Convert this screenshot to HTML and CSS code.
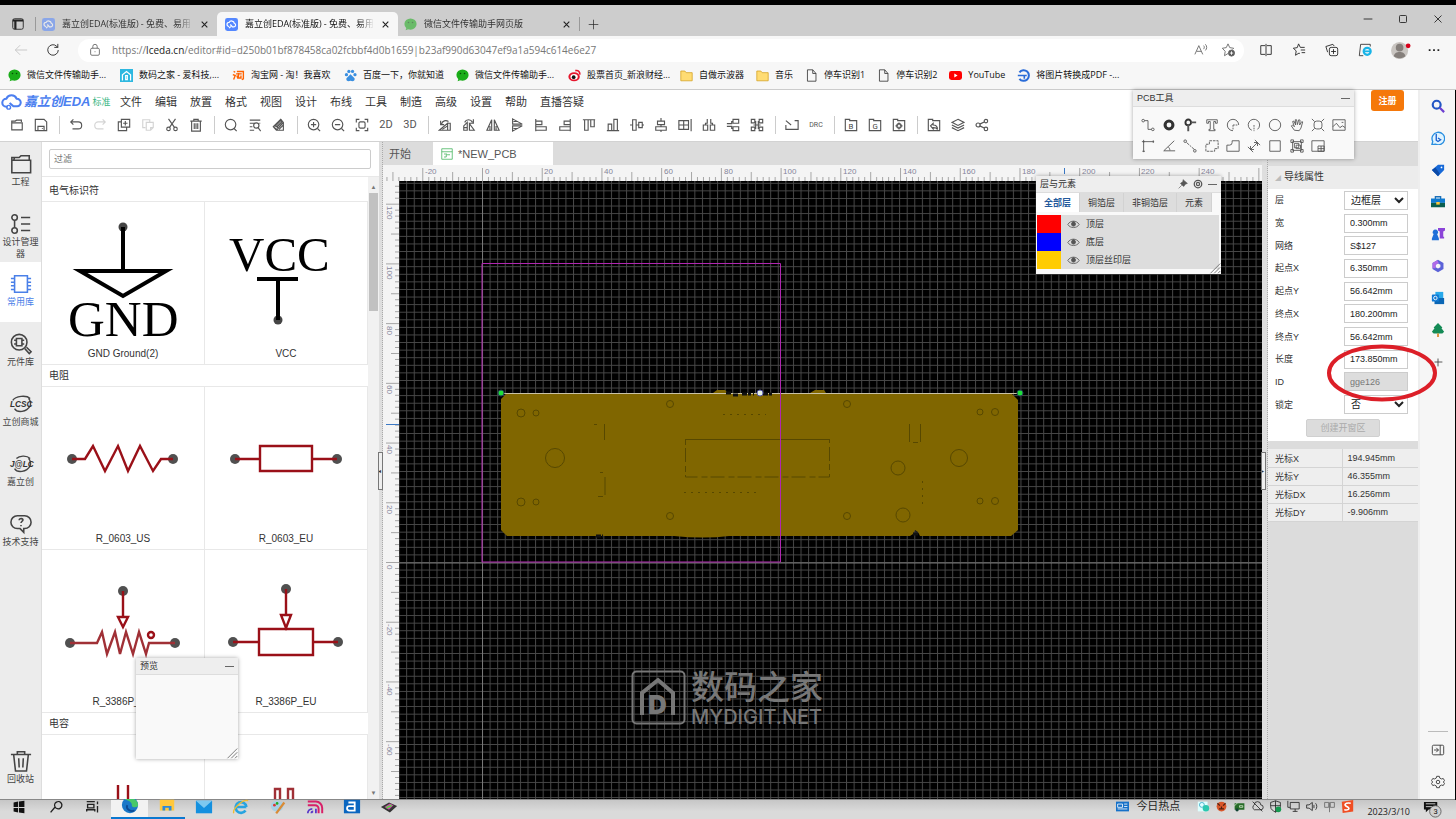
FILE: index.html
```html
<!DOCTYPE html>
<html lang="zh-CN">
<head>
  <meta charset="UTF-8" />
  <meta name="viewport" content="width=device-width, initial-scale=1" />
  <title>嘉立创EDA(标准版) - 免费、易用</title>
  <link rel="stylesheet" href="styles.css">
</head>
<body>
  <!-- shared icons -->
  <svg class="sprite" aria-hidden="true">
    <symbol id="close" viewBox="0 0 16 16"><path d="M3 3l10 10M13 3L3 13"/></symbol>
    <symbol id="cloud" viewBox="0 0 16 16"><rect width="16" height="16" rx="3" fill="#5588ff" stroke="none"/><path d="M5 10.500a2.500 2.500 0 010-5 3.500 3.500 0 016.500 1 2.200 2.200 0 01-.5 4.300H9L6.500 8M5 12.500l2-2" stroke="#fff" stroke-width="1.500"/></symbol>
    <symbol id="wechat" viewBox="0 0 16 16"><ellipse cx="8" cy="7.500" rx="7.500" ry="7" fill="#1aad19" stroke="none"/><path d="M3 12l-1 3 4-1.500z" fill="#1aad19" stroke="none"/><circle cx="5.500" cy="5.500" r="1" fill="#064d06" stroke="none"/><circle cx="10.500" cy="5.500" r="1" fill="#064d06" stroke="none"/></symbol>
    <symbol id="folder-y" viewBox="0 0 16 16"><path d="M1 2.500h5l1.500 2H15v10H1z" fill="#ffdc73" stroke="#d6a528"/></symbol>
    <symbol id="page" viewBox="0 0 16 16"><path d="M3 1h6.500l4 4.500v9.500H3zM9.500 1v4.500h4"/></symbol>
    <symbol id="eye" viewBox="0 0 16 16"><path d="M1 8c3-5.500 11-5.500 14 0-3 5-11 5-14 0z"/><circle cx="8" cy="7.500" r="2.500" fill="#555"/><path d="M8 4v4" stroke-width="2"/></symbol>
    <symbol id="grip" viewBox="0 0 16 16"><path d="M2 15L15 2M7 15l8-8M12 15l3-3"/></symbol>
    <symbol id="folder" viewBox="0 0 16 16"><path d="M2 13.500v-10h4l1.500-1H13v2M2 5.500h12v8H2z"/></symbol>
    <symbol id="save" viewBox="0 0 16 16"><path d="M1.500 1.500h10l3 3v10h-13zM4.500 14V9.500h7V14M9 12h1"/></symbol>
    <symbol id="undo" viewBox="0 0 16 16"><path d="M5 1.500L2 4.500l3 3M2 4.500h8.500a3.800 3.800 0 010 8H4"/></symbol>
    <symbol id="redo" viewBox="0 0 16 16"><path d="M11 1.500l3 3-3 3M14 4.500H6a3.800 3.800 0 000 8h6"/></symbol>
    <symbol id="copy" viewBox="0 0 16 16"><path d="M5 1.500h9.500v9H5zM5 4.500H1.500v10H11v-4M9.500 3.500v5M7 6h5"/></symbol>
    <symbol id="paste" viewBox="0 0 16 16"><path d="M5 11H2V2h8v3M6 5h8v6l-3 3H6zM11 14v-3h3"/></symbol>
    <symbol id="cut" viewBox="0 0 16 16"><path d="M4 1l7 10M12 1L5 11"/><circle cx="4" cy="12.500" r="2"/><circle cx="12" cy="12.500" r="2"/></symbol>
    <symbol id="bin" viewBox="0 0 16 16"><path d="M1.500 3.500h13M5.500 3.500v-2h5v2M3 3.500V15h10V3.500M6 6v6.500M8 6v6.500M10 6v6.500"/></symbol>
    <symbol id="find" viewBox="0 0 16 16"><circle cx="7.500" cy="7.500" r="6"/><path d="M11.500 12l3 3"/></symbol>
    <symbol id="findlist" viewBox="0 0 16 16"><path d="M2 2.500h12M2 6h5M2 10h3M2 14h5M14 6h-1"/><circle cx="9.500" cy="8.500" r="3"/><path d="M11.500 11l3 4"/></symbol>
    <symbol id="eraser" viewBox="0 0 16 16"><path d="M1.500 10L10 1.500l3 3.500v9H5zM5 14l8-9M1.500 10l4 3M8 13l5-5M7 12l-2-3"/><path d="M3 9l7-7 1.500 3L6 10z" fill="#888"/></symbol>
    <symbol id="zin" viewBox="0 0 16 16"><circle cx="7.500" cy="7.500" r="6"/><path d="M12 12l3 3M7.500 4.500v6M4.500 7.500h6"/></symbol>
    <symbol id="zout" viewBox="0 0 16 16"><circle cx="7.500" cy="7.500" r="6"/><path d="M12 12l3 3M4.500 7.500h6"/></symbol>
    <symbol id="fit" viewBox="0 0 16 16"><path d="M1.500 5V1.500H5M11 1.500h3.500V5M14.500 11v3.500H11M5 14.500H1.500V11"/><rect x="4.500" y="4.500" width="7" height="7" rx="1.500"/></symbol>
    <symbol id="rotl" viewBox="0 0 16 16"><path d="M1.500 14h9.500V6zM11 6h3v8h-3M4 7c1-4 5-5 8-3M3 3v4.500h4M5 13l6-4" /></symbol>
    <symbol id="rotr" viewBox="0 0 16 16"><path d="M2 14V9l4-4v9zM8.500 14V6.500l5.500 7.500zM3 5c2-4 7-4 9 0M13 1.500V6H9M2 11h4"/></symbol>
    <symbol id="fliph" viewBox="0 0 16 16"><path d="M6.500 2v12H1zM9.500 2v12H15zM4.500 9v5M11.500 9v5"/></symbol>
    <symbol id="flipv" viewBox="0 0 16 16"><path d="M3 1l11 6H3zM3 15l11-6H3zM4 4h5M4 12h5"/></symbol>
    <symbol id="al" viewBox="0 0 16 16"><path d="M2 1v14M2 3.500h7v4H2M2 10h12v4H2"/></symbol>
    <symbol id="ar" viewBox="0 0 16 16"><path d="M14 1v14M14 3.500H7v4h7M14 10H2v4h12"/></symbol>
    <symbol id="at" viewBox="0 0 16 16"><path d="M1 2h14M3 2v12h4V2M10 2v8h4V2"/></symbol>
    <symbol id="ab" viewBox="0 0 16 16"><path d="M1 14.500h14M2.500 14V7h4v7M9 14V1.500h4V14"/></symbol>
    <symbol id="cx" viewBox="0 0 16 16"><path d="M3 2h4v12H3zM10 5h4v6h-4zM0 8h3M7 8h3M14 8h2"/></symbol>
    <symbol id="cy" viewBox="0 0 16 16"><path d="M4 3.500h8v4H4zM2 10h12v4H2zM8 0v3.500M8 7.500V10M8 14v2"/></symbol>
    <symbol id="tbl" viewBox="0 0 16 16"><path d="M1 3h11v10H1zM1 8h11M6.500 3v10M15 1v14"/></symbol>
    <symbol id="disth" viewBox="0 0 16 16"><path d="M1.500 8h5v6h-5zM9.500 8h5v6h-5zM4 8V6h2V1M12 8V6h-2V1"/></symbol>
    <symbol id="distv" viewBox="0 0 16 16"><path d="M8 1.500h6.500v4.500H8zM8 10h6.500v4.500H8zM8 4H6.500v2.500H1M8 12H6.500V9.500H1"/></symbol>
    <symbol id="dist4" viewBox="0 0 16 16"><path d="M1.500 1.500h4v4h-4zM10.500 1.500h4v4h-4zM1.500 10.500h4v4h-4zM10.500 10.500h4v4h-4zM5.500 4h1v8h-1M10.500 4h-1v8h1M4 8h8"/></symbol>
    <symbol id="outline" viewBox="0 0 16 16"><path d="M1 3l6 5M11 3h4v10H1V8"/></symbol>
    <symbol id="fb" viewBox="0 0 16 16"><path d="M1.500 14.500v-13h5V3h8v11.500z"/></symbol>
    <symbol id="lay" viewBox="0 0 16 16"><path d="M8 1.500l7 3.500-7 3.500L1 5zM1 8l7 3.500L15 8M1 11l7 3.500 7-3.500"/></symbol>
    <symbol id="share" viewBox="0 0 16 16"><circle cx="3.500" cy="8" r="2.300"/><circle cx="12.500" cy="3.500" r="2"/><circle cx="12.500" cy="12.500" r="2"/><path d="M5.500 7l5-2.500M5.500 9l5 2.500"/></symbol>
  </svg>

  <header class="titlebar">
    <button class="tab-actions" aria-label="标签操作"><svg class="icon dark" viewBox="0 0 16 16"><rect x="2" y="2" width="12" height="12" rx="2"/><path d="M2 4h12M5 4v10" stroke-width="2.500"/></svg></button>
    <div class="tab">
      <svg class="fav faded"><use href="#cloud"/></svg><span class="tab-text">嘉立创EDA(标准版) - 免费、易用</span>
      <button aria-label="关闭"><svg class="x"><use href="#close"/></svg></button>
    </div>
    <div class="tab current">
      <svg class="fav"><use href="#cloud"/></svg><span class="tab-text">嘉立创EDA(标准版) - 免费、易用</span>
      <button aria-label="关闭"><svg class="x"><use href="#close"/></svg></button>
    </div>
    <div class="tab">
      <svg class="fav faded"><use href="#wechat"/></svg><span class="tab-text">微信文件传输助手网页版</span>
      <button aria-label="关闭"><svg class="x"><use href="#close"/></svg></button>
    </div>
    <button class="new-tab" aria-label="新标签"><svg class="icon dark" viewBox="0 0 16 16"><path d="M8 1v14M1 8h14"/></svg></button>
    <div class="win-controls">
      <button aria-label="最小化"><svg class="icon dark" viewBox="0 0 16 16"><path d="M3 8h10"/></svg></button>
      <button aria-label="最大化"><svg class="icon dark" viewBox="0 0 16 16"><rect x="4" y="4" width="8" height="8" rx="1"/></svg></button>
      <button aria-label="关闭窗口"><svg class="icon dark" viewBox="0 0 16 16"><path d="M4 4l8 8M12 4l-8 8"/></svg></button>
    </div>
  </header>

  <div class="addressbar">
    <button class="nav-btn" aria-label="后退"><svg class="icon light" viewBox="0 0 16 16"><path d="M15 8H1.500M7 2.500L1.500 8 7 13.500"/></svg></button>
    <button class="nav-btn" aria-label="刷新"><svg class="icon dark" viewBox="0 0 16 16"><path d="M14 8a6 6 0 11-2-4.500L13.500 5M13.500 1v4h-4"/></svg></button>
    <div class="url">
      <svg class="icon" viewBox="0 0 16 16"><rect x="3" y="6" width="10" height="8" rx="1.500"/><path d="M5.500 6V4a2.500 2.500 0 015 0v2M8 9.500v1"/></svg>
      <span class="url-text">https://<b>lceda.cn</b>/editor#id=d250b01bf878458ca02fcbbf4d0b1659|b23af990d63047ef9a1a594c614e6e27</span>
      <svg class="icon" viewBox="0 0 16 16"><path d="M1 13L5.500 3 10 13M3 9.500h5M11 3c1 1 1 2.500 0 4M13 1.500c2 2 2 5 0 7"/></svg>
      <svg class="icon" viewBox="0 0 16 16"><path d="M8 12l-4 2.500.8-5L1.500 6l4.500-.7L8 1l2 4.300 4.500.7-1.500 1.500"/><circle cx="12" cy="11.500" r="3.500" fill="#555"/><path d="M12 9.500v4M10 11.500h4" stroke="#fff"/></svg>
    </div>
    <div class="browser-icons">
      <svg class="icon dark" viewBox="0 0 16 16"><path d="M7 3H2v10h5M9 3h5v10H9M8 1v14"/></svg>
      <svg class="icon dark" viewBox="0 0 16 16"><path d="M9 12l-1-.5L4 14l.8-5L1.500 6 6 5.300 7.500 1l2 4h5M10 8h5M11 11h4"/></svg>
      <svg class="icon dark" viewBox="0 0 16 16"><rect x="5" y="5" width="9.500" height="9.500" rx="2"/><path d="M3 10.500L1 4l8-2.500 1.500 2M9.700 7v5.500M7 9.700h5.500"/></svg>
      <svg class="icon" viewBox="0 0 16 16"><path d="M14 4V1.500H3L1.500 14.500H6" stroke="#333"/><circle cx="10.500" cy="9.500" r="4" stroke="#18b4e8" stroke-width="2.500"/><path d="M7 9.500h7" stroke="#18b4e8" stroke-width="2"/></svg>
      <svg class="avatar" viewBox="0 0 22 20"><circle cx="9" cy="10" r="9" fill="#c9c5c1"/><circle cx="9" cy="7" r="4" fill="#857f7b"/><path d="M3 16c0-6 12-6 12 0-4 3-8 3-12 0z" fill="#857f7b"/><circle cx="18" cy="5" r="2.500" fill="#d8001b"/></svg>
      <svg class="icon dark" viewBox="0 0 16 16"><path d="M2 8h2M7 8h2M12 8h2" stroke-width="2"/></svg>
    </div>
  </div>

  <nav class="bookmarks">
    <a class="wide" href="#"><svg><use href="#wechat"/></svg>微信文件传输助手...</a>
    <a class="wide" href="#"><svg viewBox="0 0 16 16"><rect width="16" height="16" fill="#2eb8e0" stroke="none"/><path d="M3 14V7l5-4 5 4v7M7 8h2v5H7z" stroke="#fff" stroke-width="1.500"/></svg>数码之家 - 爱科技,...</a>
    <a class="wide" href="#"><svg viewBox="0 0 16 16"><path d="M2 3l2 1M1 7l3 1-2 5M6 3h8v9l-2 1M5 6h7M8 5v6M6 8l1 3h4V8" stroke="#ff6200" stroke-width="1.700"/></svg>淘宝网 - 淘！我喜欢</a>
    <a class="wide" href="#"><svg viewBox="0 0 16 16"><g fill="#3a8fe0" stroke="none"><circle cx="3" cy="7" r="2"/><circle cx="6" cy="3" r="2"/><circle cx="10.500" cy="3" r="2"/><circle cx="13.500" cy="7" r="2"/><path d="M8 6.500l5 5c1 4-3 4-5 3-2 1-6 1-5-3z"/></g></svg>百度一下，你就知道</a>
    <a class="wide" href="#"><svg><use href="#wechat"/></svg>微信文件传输助手...</a>
    <a class="wide" href="#"><svg viewBox="0 0 16 16"><ellipse cx="7.500" cy="9.500" rx="7" ry="5.500" fill="#e6162d" stroke="none"/><ellipse cx="7.500" cy="9.500" rx="4.500" ry="3.500" fill="#fff" stroke="none"/><circle cx="7" cy="10" r="2.300" fill="#111" stroke="none"/><path d="M9 2c4-1 6 2 5.500 5" stroke="#e6162d" stroke-width="2"/></svg>股票首页_新浪财经...</a>
    <a href="#"><svg><use href="#folder-y"/></svg>自做示波器</a>
    <a href="#"><svg><use href="#folder-y"/></svg>音乐</a>
    <a href="#"><svg><use href="#page"/></svg>停车识别1</a>
    <a href="#"><svg><use href="#page"/></svg>停车识别2</a>
    <a href="#"><svg viewBox="0 0 16 16"><rect y="2.500" width="16" height="11" rx="3" fill="#f00" stroke="none"/><path d="M6.500 5.500v5l4-2.500z" fill="#fff" stroke="none"/></svg>YouTube</a>
    <a href="#"><svg viewBox="0 0 16 16"><path d="M3 4a6.500 6.500 0 110 8" stroke="#2a6cd8" stroke-width="2.500"/><path d="M1 8h8M9 8v4M9 8h3" stroke="#2a6cd8" stroke-width="2"/></svg>将图片转换成PDF -...</a>
  </nav>

  <div class="window">
    <main class="app">
      <nav class="menubar">
        <a class="brand" href="#">
          <svg viewBox="0 0 22 18"><path d="M7 13.500H5.500a4.200 4.200 0 010-8.500A6 6 0 0116.500 5a4 4 0 01.500 8h-4L9 9.500" stroke="#4c7ff0" stroke-width="2.200"/><circle cx="8" cy="14" r="2" stroke="#4c7ff0" stroke-width="1.500"/></svg>
          <i>嘉立创EDA</i><small>标准</small>
        </a>
        <button>文件</button><button>编辑</button><button>放置</button><button>格式</button><button>视图</button><button>设计</button><button>布线</button><button>工具</button><button>制造</button><button>高级</button><button>设置</button><button>帮助</button><button>直播答疑</button>
        <button class="register">注册</button>
      </nav>

      <div class="toolbar">
        <button aria-label="打开"><svg><use href="#folder"/></svg></button>
        <button aria-label="保存"><svg><use href="#save"/></svg></button>
        <span class="sep"></span>
        <button aria-label="撤销"><svg><use href="#undo"/></svg></button>
        <button class="off" aria-label="重做"><svg><use href="#redo"/></svg></button>
        <button aria-label="复制"><svg><use href="#copy"/></svg></button>
        <button class="off" aria-label="粘贴"><svg><use href="#paste"/></svg></button>
        <button aria-label="剪切"><svg><use href="#cut"/></svg></button>
        <button aria-label="删除"><svg><use href="#bin"/></svg></button>
        <span class="sep"></span>
        <button aria-label="查找"><svg><use href="#find"/></svg></button>
        <button aria-label="查找相似"><svg><use href="#findlist"/></svg></button>
        <button aria-label="清除"><svg><use href="#eraser"/></svg></button>
        <span class="sep"></span>
        <button aria-label="放大"><svg><use href="#zin"/></svg></button>
        <button aria-label="缩小"><svg><use href="#zout"/></svg></button>
        <button aria-label="适合窗口"><svg><use href="#fit"/></svg></button>
        <button>2D</button>
        <button>3D</button>
        <span class="sep"></span>
        <button aria-label="左旋"><svg><use href="#rotl"/></svg></button>
        <button aria-label="右旋"><svg><use href="#rotr"/></svg></button>
        <button aria-label="水平翻转"><svg><use href="#fliph"/></svg></button>
        <button aria-label="垂直翻转"><svg><use href="#flipv"/></svg></button>
        <button aria-label="左对齐"><svg><use href="#al"/></svg></button>
        <button aria-label="右对齐"><svg><use href="#ar"/></svg></button>
        <button aria-label="顶对齐"><svg><use href="#at"/></svg></button>
        <button aria-label="底对齐"><svg><use href="#ab"/></svg></button>
        <button aria-label="水平居中"><svg><use href="#cx"/></svg></button>
        <button aria-label="垂直居中"><svg><use href="#cy"/></svg></button>
        <button aria-label="对齐网格"><svg><use href="#tbl"/></svg></button>
        <button aria-label="水平分布"><svg><use href="#disth"/></svg></button>
        <button aria-label="垂直分布"><svg><use href="#distv"/></svg></button>
        <button aria-label="阵列分布"><svg><use href="#dist4"/></svg></button>
        <span class="sep"></span>
        <button aria-label="边框"><svg><use href="#outline"/></svg></button>
        <button class="drc">DRC</button>
        <span class="sep"></span>
        <button aria-label="BOM"><svg viewBox="0 0 16 16"><use href="#fb"/><text x="5" y="12">B</text></svg></button>
        <button aria-label="Gerber"><svg viewBox="0 0 16 16"><use href="#fb"/><text x="5" y="12">G</text></svg></button>
        <button aria-label="坐标文件"><svg viewBox="0 0 16 16"><use href="#fb"/><circle cx="8" cy="9" r="2.500"/><path d="M8 5v3M8 10v3M4 9h3M9 9h3"/></svg></button>
        <span class="sep"></span>
        <button aria-label="导入"><svg viewBox="0 0 16 16"><use href="#fb"/><path d="M4 9l3-3v2c4 0 5 2 5 5-1-2-2-2-5-2v1.500z"/></svg></button>
        <button aria-label="图层"><svg><use href="#lay"/></svg></button>
        <button aria-label="分享"><svg><use href="#share"/></svg></button>
      </div>

      <div class="workspace">
        <aside class="rail">
          <button><svg viewBox="0 0 24 24"><path d="M2 21.500V5h8l2-2h9v4M2 8h20.500v13.500H2zM5 5l-1 3"/></svg>工程</button>
          <button><svg viewBox="0 0 24 24"><circle cx="5" cy="5" r="3"/><circle cx="5" cy="19" r="3"/><path d="M5 8v8M12 5h10M12 12h10M12 19h10"/></svg>设计管理器</button>
          <button class="selected"><svg viewBox="0 0 24 24"><path d="M5 3h14v18H5zM1 6h4M1 10h4M1 14h4M1 18h4M19 6h4M19 10h4M19 14h4M19 18h4"/></svg>常用库</button>
          <button><svg viewBox="0 0 24 24"><circle cx="10" cy="10" r="8.500"/><path d="M7 6h6v8H7zM4.500 8H7M4.500 12H7M13 8h2.500M13 12h2.500M16 17l5 5.500 2-2-5-5"/></svg>元件库</button>
          <button><svg viewBox="0 0 24 24"><path d="M22 6C18 2 6 3 3 8M5 17c3 5 13 4 17-3 1-3 0-7-2-8" stroke-width="1.500"/><text x="0" y="15">LCSC</text></svg>立创商城</button>
          <button><svg viewBox="0 0 24 24"><path d="M22 6C18 2 10 3 7 6M5 17c3 5 13 4 17-3 1-3 0-7-2-8" stroke-width="1.500"/><text x="0" y="15">J@LC</text></svg>嘉立创</button>
          <button><svg viewBox="0 0 24 24"><path d="M8 3h8a7 7 0 010 14h-1v4l-4-4H8A7 7 0 018 3z"/><path d="M10 8c0-3 5-2 4 0-.5 1-2 1.500-2 3M12 13v1.500"/></svg>技术支持</button>
          <button class="trash"><svg viewBox="0 0 24 24"><path d="M1 5h22M8 5V2h8v3M4 5l2 18h12l2-18M9.500 9l.5 10M14.500 9l-.5 10"/></svg>回收站</button>
        </aside>

        <section class="library">
          <div class="filter"><input type="text" placeholder="过滤" aria-label="过滤"></div>
          <div class="lib-body">
            <div class="lib-list">
              <h2>电气标识符</h2>
              <div class="cells">
                <figure>
                  <svg viewBox="0 0 162 141"><circle cx="81" cy="25" r="4.500" fill="#444"/><g stroke="#000" stroke-width="4"><path d="M81 25v43"/><path d="M38 69h86L81 94z" stroke-miterlimit="8"/></g><text x="26" y="134" font-size="51">GND</text></svg>
                  <figcaption>GND Ground(2)</figcaption>
                </figure>
                <figure>
                  <svg viewBox="0 0 162 141"><circle cx="73" cy="118" r="4.500" fill="#444"/><path d="M52 77h41M73 77v41" stroke="#000" stroke-width="4"/><text x="24" y="69" font-size="49">VCC</text></svg>
                  <figcaption>VCC</figcaption>
                </figure>
              </div>
              <h2>电阻</h2>
              <div class="cells">
                <figure>
                  <svg viewBox="0 0 162 141"><g fill="#505050"><circle cx="30" cy="72" r="5"/><circle cx="131" cy="72" r="5"/></g><path class="wire" d="M30 72h13l8-13 12 25 13-25 10 25 12-25 13 25 8-12h12"/></svg>
                  <figcaption>R_0603_US</figcaption>
                </figure>
                <figure>
                  <svg viewBox="0 0 162 141"><g fill="#505050"><circle cx="30" cy="72" r="5"/><circle cx="132" cy="72" r="5"/></g><path class="wire" d="M30 72h25M107 72h25M55 59h52v25H55z"/></svg>
                  <figcaption>R_0603_EU</figcaption>
                </figure>
                <figure>
                  <svg viewBox="0 0 162 141"><g fill="#505050"><circle cx="81" cy="41" r="5"/><circle cx="28" cy="93" r="5"/><circle cx="133" cy="93" r="5"/></g><path class="wire thin" d="M28 93h27l5-11 5 22 8-22 5 22 6-22 7 22 6-22 7 22 3-11h26"/><path class="wire" d="M81 41v27M76 67h10l-5 10z"/><circle class="wire" cx="109" cy="85" r="3"/></svg>
                  <figcaption>R_3386P_US</figcaption>
                </figure>
                <figure>
                  <svg viewBox="0 0 162 141"><g fill="#505050"><circle cx="81" cy="39" r="5"/><circle cx="28" cy="92" r="5"/><circle cx="133" cy="92" r="5"/></g><path class="wire" d="M28 92h26M108 92h25M54 79h54v26H54zM81 39v26M76 65h10l-5 13z"/></svg>
                  <figcaption>R_3386P_EU</figcaption>
                </figure>
              </div>
              <h2>电容</h2>
              <div class="cells">
                <figure><svg viewBox="0 0 162 141"><path class="wire" d="M76 50v40M86 50v40"/></svg></figure>
                <figure><svg viewBox="0 0 162 141"><path class="wire thin" d="M70 90V54h5v36M83 90V54h5v36"/></svg></figure>
              </div>
            </div>
            <div class="scrollbar"><span class="arrow">▲</span><span class="thumb"></span><span class="arrow">▼</span></div>
          </div>
          <div class="float preview">
            <div class="float-head">预览<span class="minus"></span></div>
            <svg class="grip"><use href="#grip"/></svg>
          </div>
        </section>
        <div class="splitter"><span>◂</span></div>

        <section class="editor">
          <div class="doc-tabs">
            <button>开始</button>
            <button class="active"><svg viewBox="0 0 16 16"><path d="M1 1h14v14H1zM1 5h14M4 12h3v-3h5M4 8h4"/></svg>*NEW_PCB</button>
          </div>
          <div class="canvas">
            <svg class="ruler-top">
              <defs>
                <pattern id="tx" x="99" width="59.720" height="16" patternUnits="userSpaceOnUse">
                  <path d="M.5 3v13M30.400 7v9M6.500 12v4M12.400 12v4M18.400 12v4M24.400 12v4M36.300 12v4M42.300 12v4M48.300 12v4M54.300 12v4"/>
                </pattern>
              </defs>
              <rect width="100%" height="16" fill="url(#tx)"/>
              <path class="cursor" d="M681.500 3v6"/>
              <text x="42" y="9">-20</text><text x="102" y="9">0</text><text x="161" y="9">20</text><text x="221" y="9">40</text><text x="281" y="9">60</text><text x="341" y="9">80</text><text x="400" y="9">100</text><text x="460" y="9">120</text><text x="520" y="9">140</text><text x="579" y="9">160</text><text x="639" y="9">180</text><text x="699" y="9">200</text><text x="758" y="9">220</text><text x="818" y="9">240</text>
            </svg>
            <svg class="ruler-left">
              <defs>
                <pattern id="ty" y="381" width="16" height="59.720" patternUnits="userSpaceOnUse">
                  <path d="M3 .5h13M8 30.400h8M12 6.500h4M12 12.400h4M12 18.400h4M12 24.400h4M12 36.300h4M12 42.300h4M12 48.300h4M12 54.300h4"/>
                </pattern>
              </defs>
              <rect width="16" height="100%" fill="url(#ty)"/>
              <path class="cursor" d="M3 243.500h13"/>
              <g><text transform="translate(4 25) rotate(90)">120</text><text transform="translate(4 85) rotate(90)">100</text><text transform="translate(4 145) rotate(90)">80</text><text transform="translate(4 204) rotate(90)">60</text><text transform="translate(4 264) rotate(90)">40</text><text transform="translate(4 324) rotate(90)">20</text><text transform="translate(4 384) rotate(90)">0</text><text transform="translate(4 443) rotate(90)">-20</text><text transform="translate(4 503) rotate(90)">-40</text><text transform="translate(4 563) rotate(90)">-60</text></g>
            </svg>
            <svg class="board">
              <defs>
                <pattern id="grid" x="83" y="381" width="7.584" height="7.584" patternUnits="userSpaceOnUse"><path d="M.5 0v7.600M0 .5h7.600"/></pattern>
              </defs>
              <rect width="100%" height="100%" fill="#000"/>
              <rect width="100%" height="100%" fill="url(#grid)"/>
              <path d="M83.500 0v700M0 382h900" stroke="#777"/>
              <!-- board body -->
              <path d="M108 212h206l4-3h8l3 3h82l5-3h9l2 3h185l7 7v130l-7 6h-91l-2-4-3-2-2 4-3 2H330q-25 3-55 0H108l-6-6V218z" fill="#806600"/>
              <path d="M102 212.500h519" stroke="#c9c2a6"/>
              <path d="M327 212h6M334 214h6M343 213h12M364 213h10M197 355h7M514 353h5" stroke="#111" stroke-width="3" stroke-dasharray="5 1 3 2"/>
              <g stroke="#574800" fill="none">
                <circle cx="122" cy="232" r="4"/><circle cx="137" cy="232" r="3"/><circle cx="271" cy="223" r="3.500"/><circle cx="448" cy="223" r="3.500"/><circle cx="581" cy="231" r="3"/><circle cx="596" cy="231" r="3.500"/>
                <circle cx="156" cy="277" r="9.500"/><circle cx="560" cy="277" r="8.500"/><circle cx="499" cy="287" r="7"/><circle cx="504" cy="334" r="7"/>
                <circle cx="122" cy="321" r="4"/><circle cx="137" cy="321" r="3"/><circle cx="271" cy="335" r="3.500"/><circle cx="448" cy="335" r="3.500"/><circle cx="581" cy="320" r="3"/><circle cx="596" cy="320" r="3.500"/>
                <path d="M286 258.500h145"/>
                <path d="M286.500 258v38h144v-38" stroke-dasharray="6 3 14 4"/>
                <path d="M195 243.500h3M205.500 243v16M201 291.500h3M206 296v18M199 315.500h5M510.500 243v18M521.500 243v18M514 261.500h5"/>
                <path d="M285 311.500h75M324 233.500h43M523.500 300v28" stroke-dasharray="2 5"/>
              </g>
              <path d="M83 82.500h298.500V381H83z" fill="none" stroke="#b026b0"/>
              <circle cx="102" cy="212" r="3" fill="#1fe03a" stroke="#245"/><circle cx="361" cy="212" r="3" fill="#e6f3e6" stroke="#55a"/><circle cx="621" cy="212" r="3" fill="#1fe03a" stroke="#245"/>
              <g class="mark">
                <rect x="233.500" y="490.500" width="52" height="52" rx="4" fill="none" stroke-width="2"/>
                <path d="M243 534v-22l16-13 15 13v22" fill="none" stroke-width="4"/>
                <text x="249" y="533" class="mark-d">D</text>
                <text x="292" y="518" class="mark-cn">数码之家</text>
                <text x="292" y="543" class="mark-en">MYDIGIT.NET</text>
              </g>
            </svg>
          </div>

          <div class="float layers">
            <div class="float-head">层与元素
              <svg viewBox="0 0 16 16"><path d="M8 1l7 6-3 1-3 4-5-5 4-3zM1 15l5-5" fill="#555"/></svg>
              <svg viewBox="0 0 16 16"><circle cx="8" cy="8" r="6" stroke-width="2"/><circle cx="8" cy="8" r="2.500" stroke-width="2"/></svg>
              <span class="minus"></span>
            </div>
            <div class="layer-tabs"><button class="on">全部层</button><button>铜箔层</button><button>非铜箔层</button><button>元素</button></div>
            <ul>
              <li><span class="swatch top"></span><svg><use href="#eye"/></svg>顶层</li>
              <li><span class="swatch bottom"></span><svg><use href="#eye"/></svg>底层</li>
              <li><span class="swatch silk"></span><svg><use href="#eye"/></svg>顶层丝印层</li>
            </ul>
            <svg class="grip"><use href="#grip"/></svg>
          </div>
        </section>
        <div class="splitter right"><span>▸</span></div>

        <aside class="props">
          <h3><span>◢</span>导线属性</h3>
          <form>
            <div class="fields">
              <label for="layer">层</label><select id="layer"><option>边框层</option></select>
              <label for="width">宽</label><input id="width" value="0.300mm">
              <label for="net">网络</label><input id="net" value="S$127">
              <label for="sx">起点X</label><input id="sx" value="6.350mm">
              <label for="sy">起点Y</label><input id="sy" value="56.642mm">
              <label for="ex">终点X</label><input id="ex" value="180.200mm">
              <label for="ey">终点Y</label><input id="ey" value="56.642mm">
              <label for="len">长度</label><input id="len" value="173.850mm">
              <label for="gid">ID</label><input id="gid" value="gge126" disabled>
              <label for="lock">锁定</label><select id="lock"><option>否</option></select>
            </div>
            <button type="button" class="solder" disabled>创建开窗区</button>
          </form>
          <table>
            <tr><th>光标X</th><td>194.945mm</td></tr>
            <tr><th>光标Y</th><td>46.355mm</td></tr>
            <tr><th>光标DX</th><td>16.256mm</td></tr>
            <tr><th>光标DY</th><td>-9.906mm</td></tr>
          </table>
          <svg class="callout" viewBox="0 0 112 58"><ellipse cx="56" cy="29" rx="53" ry="26.500"/></svg>
        </aside>
      </div>

      <div class="float tools">
        <div class="float-head">PCB工具<span class="minus"></span></div>
        <div class="tool-grid">
          <button aria-label="导线"><svg viewBox="0 0 16 16"><circle cx="2.500" cy="3" r="1.500"/><circle cx="13.500" cy="13" r="1.500"/><path d="M4 3h4v10h4"/></svg></button>
          <button aria-label="焊盘"><svg viewBox="0 0 16 16"><circle cx="8" cy="8" r="4.500" stroke="#333" stroke-width="3.500"/></svg></button>
          <button aria-label="过孔"><svg viewBox="0 0 16 16"><circle cx="6" cy="5" r="3.200" stroke="#333" stroke-width="2.200"/><path d="M6 8v7M9 5h6" stroke-width="2.200"/></svg></button>
          <button aria-label="文本"><svg viewBox="0 0 16 16"><path d="M2 2h12v4h-2V4h-2v9h1.500v1.500h-7V13H6V4H4v2H2z"/></svg></button>
          <button aria-label="圆弧"><svg viewBox="0 0 16 16"><path d="M14.500 8A6.500 6.500 0 108 14.500" /><path d="M8 8v6M8 8h6" stroke-dasharray="2 1"/></svg></button>
          <button aria-label="中心圆弧"><svg viewBox="0 0 16 16"><path d="M5.500 14a6.500 6.500 0 116.500-1" /><path d="M8 8v7" stroke-dasharray="2 1"/></svg></button>
          <button aria-label="圆"><svg viewBox="0 0 16 16"><circle cx="8" cy="8" r="6.500"/></svg></button>
          <button aria-label="拖动"><svg viewBox="0 0 16 16"><path d="M5 14L1.500 9l1.500-1 2 2L3 4l1.500-.5L6.500 8 6 2h1.500l1 5.500L10 2l1.500.5L11 8l2.500-4 1 .5-2 7-2 3z"/></svg></button>
          <button aria-label="通孔"><svg viewBox="0 0 16 16"><rect x="3.500" y="3.500" width="9" height="9" rx="3"/><path d="M1 1l3 3M15 1l-3 3M1 15l3-3M15 15l-3-3"/></svg></button>
          <button aria-label="图片"><svg viewBox="0 0 16 16"><path d="M1 2h14v12H1zM1 10l4-4 4 5 3-2 3 2M11 5h2"/></svg></button>
          <button aria-label="原点"><svg viewBox="0 0 16 16"><path d="M3 15V3h12M1 3h3M3 1v3M14 1.500v3M1.500 14h3"/></svg></button>
          <button aria-label="角度"><svg viewBox="0 0 16 16"><path d="M14 2L2 13.500h13M7 9c1 1 2 2 2 4"/></svg></button>
          <button aria-label="连接"><svg viewBox="0 0 16 16"><circle cx="2.500" cy="2.500" r="1.500"/><circle cx="13.500" cy="13.500" r="1.500"/><path d="M4 4l9 8" stroke-dasharray="4 1 2 1"/></svg></button>
          <button aria-label="铺铜"><svg viewBox="0 0 16 16"><path d="M1 6h4V2h10v9h-4v3H1z" stroke-dasharray="3 1"/></svg></button>
          <button aria-label="实心填充"><svg viewBox="0 0 16 16"><path d="M1 14V7h3a3 3 0 003-3V2h8v12z"/></svg></button>
          <button aria-label="尺寸"><svg viewBox="0 0 16 16"><path d="M4 12l8-8M1 9l6 6M9 1l6 6M4 8v4h4M8 4h4v4"/></svg></button>
          <button aria-label="矩形"><svg viewBox="0 0 16 16"><path d="M2 2h12v12H2z"/></svg></button>
          <button aria-label="组合"><svg viewBox="0 0 16 16"><path d="M3 3h10v10H3zM5 5h5v5H5zM7 7h5v4H7zM1 1h3v3H1zM12 1h3v3h-3zM1 12h3v3H1zM12 12h3v3h-3z"/></svg></button>
          <button aria-label="拼板"><svg viewBox="0 0 16 16"><path d="M1 2h14v12H1zM8 8h7v6H8zM8 11h7M11.500 8v6"/></svg></button>
        </div>
      </div>
    </main>

    <aside class="edge">
      <svg viewBox="0 0 16 16"><circle cx="6.500" cy="6.500" r="4.500" stroke="#2457c5" stroke-width="2.500"/><path d="M10 10l5 5" stroke="#6d3fd0" stroke-width="2.500"/></svg>
      <svg viewBox="0 0 16 16"><path d="M2 12l-1 3.500L5 15a7.200 7.200 0 10-3-3z" fill="#e0f4ff" stroke="#2a8fe0" stroke-width="1.500"/><path d="M6 3.500v7l2 1.500 3-2-3-2" stroke="#1a5fd0" stroke-width="1.500"/></svg>
      <svg viewBox="0 0 16 16"><path d="M1 8l7-6 7 0 0 6-7 7z" fill="#1769d8"/><path d="M1 8l4-3 5 7-2 3z" fill="#0b4aa8"/><circle cx="12" cy="5" r="1" fill="#fff"/></svg>
      <svg viewBox="0 0 16 16"><path d="M5 5V2h6v3" stroke="#1b6fb8" stroke-width="1.500"/><path d="M0 4h16v5H0z" fill="#0f7ad0"/><path d="M0 9h16v5H0z" fill="#0a5f50"/><path d="M6 8h4v3H6z" fill="#ffc83d"/></svg>
      <svg viewBox="0 0 16 16"><path d="M5 3a3 3 0 013 4l-1 1 2 5v2H1v-2l2-5-1-1a3 3 0 013-4z" fill="#1f6fd8"/><path d="M8 1h8v3l-2 1v6h1v2h-5V5L8 4z" fill="#8b44d8"/></svg>
      <svg viewBox="0 0 16 16"><path d="M8 3l4.500 2.500v5L8 13l-4.500-2.500v-5z" stroke="#5b62d8" stroke-width="3.500"/><path d="M8 3L3.500 5.500v5" stroke="#b06be8" stroke-width="3.500"/></svg>
      <svg viewBox="0 0 16 16"><path d="M5 1h9v7H5z" fill="#28a8ea"/><path d="M4 8h11v7H4z" fill="#0a66b5"/><rect x="1" y="4" width="8" height="8" rx="1" fill="#0f78d4"/><circle cx="5" cy="8" r="2" stroke="#fff"/></svg>
      <svg viewBox="0 0 16 16"><path d="M8 0l5 5-1 1 3 4-2 2H3l-2-2 3-4-1-1z" fill="#148a55"/><path d="M7 12h2v4H7z" fill="#d88a28"/></svg>
      <svg viewBox="0 0 16 16"><path d="M8 4v9M4 8h9" stroke="#444"/></svg>
      <hr>
      <svg viewBox="0 0 16 16"><rect x="1.500" y="2.500" width="13" height="11" rx="1.500" stroke="#333"/><path d="M10.500 2.500v11M3.500 8h5M6 5.500L8.500 8 6 10.500" stroke="#333"/></svg>
      <svg viewBox="0 0 16 16"><path d="M6.500 1.500h3l.5 2 2 1 2-.5 1.500 2.500L14 8l1.500 1.500L14 12l-2-.5-2 1-.5 2h-3l-.5-2-2-1L2 12 .5 9.500 2 8 .5 6.500 2 4l2 .5 2-1z" stroke="#333"/><circle cx="8" cy="8" r="2" stroke="#333"/></svg>
    </aside>
  </div>

  <footer class="taskbar">
    <div class="apps">
      <button aria-label="开始"><svg viewBox="0 0 20 20"><path d="M4 5l5-1v6H4zM10 4l6-1v7h-6zM4 11h5v5l-5-1zM10 11h6v6l-6-1z" fill="#111"/></svg></button>
      <button aria-label="搜索"><svg viewBox="0 0 20 20"><path d="M9 10l-5 6M9 10a4 4 0 107-4 4 4 0 00-7 4z" stroke="#222" stroke-width="1.500"/></svg></button>
      <button aria-label="任务视图"><svg viewBox="0 0 20 20"><path d="M3 4h9M3 15v-2h9v2M4 7h7v4H4zM15 4v3M15 9v7" stroke="#222" stroke-width="1.500"/></svg></button>
      <button class="open lit" aria-label="Edge"><svg viewBox="0 0 20 20"><circle cx="10" cy="9" r="9" fill="#1a78c8"/><path d="M4 3a9 9 0 0115 6c0 3-6 3-7 1 1-4-4-7-8-7z" fill="#46c86a"/><path d="M7 9c-2 4 3 8 8 6" stroke="#0c4a96" stroke-width="2"/></svg></button>
      <button class="open" aria-label="资源管理器"><svg viewBox="0 0 20 20"><path d="M2 3h16v12H2z" fill="#ffc83d"/><path d="M5 15v-5h10v5h-3v-3H8v3z" fill="#2f8ad8"/></svg></button>
      <button aria-label="邮件"><svg viewBox="0 0 20 20"><path d="M1 3h18v14H1z" fill="#1490df"/><path d="M1 3l9 8 9-8z" fill="#7cc8f0"/></svg></button>
      <button aria-label="IE"><svg viewBox="0 0 20 20"><path d="M16 10H5M16 10a6 6 0 10-1 4" stroke="#28a4e0" stroke-width="3"/><path d="M2 17C0 12 12 1 18 3" stroke="#f0bc30" stroke-width="1.500"/></svg></button>
      <button aria-label="画图"><svg viewBox="0 0 20 20"><ellipse cx="9" cy="9" rx="7" ry="6" fill="#a8cfe6"/><circle cx="6" cy="8" r="1.500" fill="#d33"/><circle cx="9" cy="6" r="1.500" fill="#2a2"/><path d="M8 17l9-12" stroke="#d98b36" stroke-width="2.500"/></svg></button>
      <button aria-label="网络工具"><svg viewBox="0 0 20 20"><path d="M2 4h9a7 7 0 017 7v6M2 8h8a4 4 0 014 4v5" stroke="#d82068" stroke-width="2.200"/><path d="M2 17a5 5 0 015-5M6 17a2 2 0 012-2M11 12v5" stroke="#5a38c8" stroke-width="2"/></svg></button>
      <button aria-label="应用"><svg viewBox="0 0 20 20"><path d="M1 2h18v15H1z" fill="#0a66c0"/><path d="M6 5h7v9H7a2.500 2.500 0 010-5h6" stroke="#fff" stroke-width="2"/></svg></button>
      <button aria-label="扫描"><svg viewBox="0 0 20 20"><path d="M1 10l9-5 9 4-8 7z" fill="#333"/><path d="M5 10l6-4 4 2-5 5z" fill="#c94aa8"/><path d="M7 11l6-3" stroke="#62d048" stroke-width="2"/></svg></button>
    </div>
    <div class="tray">
      <svg viewBox="0 0 16 16"><path d="M0 2h16v12H0z" fill="#1671c8"/><path d="M2 5h6v4H2zM10 5h4M10 8h4M2 11h12" stroke="#fff"/></svg>
      <span class="news">今日热点</span>
      <svg viewBox="0 0 16 16"><path d="M1 2h12v12H1z" fill="#dff"/><circle cx="6" cy="6" r="3" stroke="#38a8c8"/><circle cx="11" cy="10" r="4" fill="#2cc8b0"/></svg>
      <svg viewBox="0 0 16 16"><circle cx="8" cy="8" r="6" fill="#d8562a"/><path d="M3 4l3 3M13 4l-3 3M5 11h6M8 8v3" stroke="#502010" stroke-width="1.500"/></svg>
      <svg viewBox="0 0 16 16"><path d="M2 4h12v8H2z" fill="#276c28"/><path d="M1 8l5-5M8 7h4v2H8z" stroke="#cfe8c8"/><circle cx="5" cy="12" r="2" fill="#143"/></svg>
      <svg viewBox="0 0 16 16"><path d="M4 12a3.500 3.500 0 010-6 4 4 0 018 0 3 3 0 010 6zM2 2l12 12" stroke="#222"/></svg>
      <svg viewBox="0 0 16 16"><path d="M8 1l6 2v5c0 4-3 5-6 7-3-2-6-3-6-7V3zM8 1v14M2 7h12" stroke="#222"/><circle cx="11.500" cy="11.500" r="3.500" fill="#159a50"/></svg>
      <svg viewBox="0 0 16 16"><path d="M4 3h11v8H4zM1 1v8h3M7 14h6M10 11v3" stroke="#222"/></svg>
      <svg viewBox="0 0 16 16"><path d="M2 6h3l4-3v10l-4-3H2zM11 6v4M13 4c2 2 2 6 0 8" stroke="#222"/></svg>
      <svg viewBox="0 0 16 16"><path d="M2 3h5v6H2zM9 3h5v6H9zM8 3v12" stroke="#666"/></svg>
      <svg viewBox="0 0 16 16"><path d="M1 2l14-2v14L2 16z" fill="#f04e23"/><path d="M12 4C5 3 3 6 7 8s4 5-3 4" stroke="#fff" stroke-width="2"/></svg>
      <time>2023/3/10</time>
      <svg class="notice" viewBox="0 0 20 20"><path d="M1 2h14v8H6l-3 3v-3H1z" fill="#111"/><path d="M3 4h10M3 7h10" stroke="#ccc"/><circle cx="13" cy="12" r="6" fill="#d0d0d0" stroke="#666"/><text x="11" y="15">3</text></svg>
    </div>
  </footer>
</body>
</html>
```
FILE: styles.css
```css
* {
  box-sizing: border-box;
}
body {
  margin: 0;
  height: 100vh;
  padding-top: 5px;
  display: flex;
  flex-direction: column;
  overflow: hidden;
  background: #000;
  color: #333;
  font: 9px/12px "Liberation Sans", "Noto Sans CJK SC", sans-serif;
}
button {
  border: 0;
  padding: 0;
  background: none;
  color: inherit;
  font: inherit;
  cursor: pointer;
}
a {
  color: inherit;
  text-decoration: none;
}
svg {
  fill: none;
  flex: none;
}
.sprite {
  position: absolute;
  width: 0;
  height: 0;
}
.icon {
  width: 14px;
  height: 14px;
  stroke: #666;
}
.icon.dark {
  stroke: #222;
}
.icon.light {
  stroke: #c4c4c4;
}

/* browser chrome */
.titlebar,
.addressbar,
.bookmarks,
.taskbar {
  flex: none;
  display: flex;
  align-items: center;
  font-family: "Open Sans", "Noto Sans CJK SC", sans-serif;
}
.titlebar {
  height: 31px;
  padding: 7px 0 0 11px;
  background: #cdcdcd;
}
.tab-actions {
  width: 25px;
  height: 14px;
  text-align: left;
  line-height: 0;
  border-right: 1px solid #999;
}
.tab {
  display: flex;
  align-items: center;
  width: 181px;
  height: 24px;
  padding: 0 8px 0 6px;
  gap: 7px;
  color: #333;
}
.tab.current {
  padding-left: 8px;
  background: #f7f7f7;
  border-radius: 5px 5px 0 0;
  color: #111;
}
.fav {
  width: 13px;
  height: 13px;
}
.faded {
  opacity: 0.55;
}
.tab-text {
  flex: 1;
  overflow: hidden;
  white-space: nowrap;
  mask-image: linear-gradient(90deg, #000 88%, transparent);
}
.tab button {
  line-height: 0;
}
.x {
  width: 9px;
  height: 9px;
  stroke: #222;
  stroke-width: 2;
}
.new-tab {
  border-left: 1px solid #999;
  height: 14px;
  padding-left: 8px;
  line-height: 0;
}
.new-tab .icon {
  width: 11px;
  height: 11px;
}
.win-controls {
  display: flex;
  gap: 21px;
  margin: -7px 11px 0 auto;
}
.addressbar {
  height: 28px;
  padding: 0 15px 0 14px;
  background: #f7f7f7;
}
.nav-btn {
  width: 32px;
  text-align: left;
  line-height: 0;
}
.url {
  flex: 1;
  display: flex;
  align-items: center;
  height: 23px;
  padding: 0 9px 0 10px;
  gap: 13px;
  background: #fff;
  border-radius: 12px;
  font-size: 10px;
  color: #777;
}
.url-text {
  flex: 1;
  margin-left: -3px;
}
.url-text b {
  font-weight: 400;
  color: #222;
}
.browser-icons {
  display: flex;
  align-items: center;
  gap: 19px;
  margin-left: 15px;
}
.avatar {
  width: 21px;
  height: 19px;
  margin: 0 -4px 0 0;
}
.bookmarks {
  height: 26px;
  padding: 0 8px 3px;
  gap: 12px;
  background: #f7f7f7;
  border-bottom: 1px solid #ccc;
}
.bookmarks a {
  display: flex;
  align-items: center;
  gap: 6px;
  white-space: nowrap;
  color: #111;
}
.bookmarks .wide {
  width: 100px;
}
.bookmarks svg {
  width: 13px;
  height: 13px;
  stroke: #333;
}
.window {
  flex: 1;
  min-height: 0;
  display: flex;
  margin-right: 1px;
  border-bottom: 1px solid #888;
  background: #f6f6f6;
}

/* editor shell */
.app {
  flex: 1;
  min-width: 0;
  display: flex;
  flex-direction: column;
  position: relative;
  background: #dcdcdc;
  border-right: 2px solid #eee;
}
.menubar {
  flex: none;
  display: flex;
  align-items: center;
  height: 24px;
  padding: 0 14px 0 1px;
  gap: 13px;
  background: #fff;
  font-size: 11px;
}
.brand {
  display: flex;
  align-items: center;
  width: 106px;
  gap: 2px;
  white-space: nowrap;
  color: #4c7ff0;
}
.brand svg {
  width: 21px;
  height: 17px;
}
.brand i {
  font-size: 13px;
  font-weight: 700;
}
.brand small {
  font-size: 9px;
  color: #35b582;
}
.register {
  align-self: flex-start;
  margin-left: auto;
  width: 33px;
  height: 21px;
  border-radius: 3px;
  background: #f5780a;
  color: #fff;
  font-size: 9px;
  font-weight: 700;
}
.toolbar {
  flex: none;
  display: flex;
  align-items: center;
  height: 28px;
  padding: 0 5px 5px;
  background: #fff;
  border-bottom: 1px solid #d2d2d2;
}
.toolbar button {
  width: 24px;
  height: 20px;
  font: 11px/20px Roboto, sans-serif;
  color: #555;
  line-height: 0;
}
.toolbar .drc {
  font-size: 7px;
}
.toolbar svg {
  width: 14px;
  height: 14px;
  stroke: #555;
  stroke-width: 1.3;
}
.toolbar text {
  font: 9px Roboto, sans-serif;
  fill: #444;
  stroke: none;
}
.toolbar .off {
  opacity: 0.25;
}
.sep {
  width: 1px;
  height: 18px;
  margin: 0 4px 0 6px;
  background: #ccc;
}
.workspace {
  flex: 1;
  min-height: 0;
  display: flex;
}
.rail {
  width: 42px;
  display: flex;
  flex-direction: column;
  background: #ececec;
  border-right: 1px solid #ddd;
}
.rail button {
  display: flex;
  flex-direction: column;
  align-items: center;
  gap: 1px;
  height: 60px;
  padding: 11px 2px 0;
  color: #444;
}
.rail svg {
  width: 22px;
  height: 22px;
  stroke: #444;
  stroke-width: 1.7;
  overflow: visible;
}
.rail text {
  font: italic 700 9px "Liberation Sans", sans-serif;
  fill: #333;
  stroke: none;
}
.rail .selected {
  background: #fff;
  color: #4a80e8;
}
.rail .selected svg {
  stroke: #4a80e8;
}
.rail .trash {
  margin-top: auto;
}
.library {
  width: 337px;
  display: flex;
  flex-direction: column;
  position: relative;
  background: #fff;
}
.filter {
  flex: none;
  height: 35px;
  padding: 7px 8px 0 7px;
  border-bottom: 1px solid #e8e8e8;
}
.filter input {
  display: block;
  width: 100%;
  height: 20px;
  padding: 0 4px;
  border: 1px solid #ccc;
  border-radius: 2px;
  font: inherit;
}
.filter input::placeholder {
  color: #777;
}
.lib-body {
  flex: 1;
  min-height: 0;
  display: flex;
}
.lib-list {
  flex: 1;
  overflow: hidden;
  padding-top: 3px;
}
.lib-list h2 {
  margin: 0;
  padding-left: 7px;
  border-bottom: 1px solid #e8e8e8;
  font-size: 10px;
  font-weight: 400;
  line-height: 21px;
}
.cells {
  display: grid;
  grid-template-columns: 1fr 1fr;
}
figure {
  margin: 0;
  height: 163px;
  border-right: 1px solid #e8e8e8;
  border-bottom: 1px solid #e8e8e8;
  text-align: center;
}
figure svg {
  display: block;
  width: 162px;
  height: 141px;
  overflow: visible;
}
figure text {
  font-family: "Liberation Serif", serif;
  fill: #000;
}
figcaption {
  font-size: 10px;
  line-height: 22px;
}
.wire {
  stroke: #9a1018;
  stroke-width: 2.4;
}
.thin {
  stroke: #a03036;
}
.scrollbar {
  width: 11px;
  display: flex;
  flex-direction: column;
  align-items: center;
  padding-top: 4px;
  background: #f1f1f1;
}
.scrollbar .thumb {
  width: 9px;
  height: 118px;
  margin-bottom: auto;
  background: #c1c1c1;
}
.arrow {
  font-size: 6px;
  line-height: 12px;
  color: #777;
}
.splitter {
  width: 4px;
  display: flex;
  align-items: center;
  position: relative;
  z-index: 1;
  background: #dedede;
  border-right: 1px dotted #aaa;
}
.splitter span {
  width: 5px;
  height: 38px;
  margin-left: -1px;
  border: 1px solid #777;
  background: #eee;
  font-size: 6px;
  line-height: 36px;
  text-indent: -1px;
  overflow: hidden;
  flex: none;
}
.splitter.right {
  width: 6px;
}

/* pcb editor */
.editor {
  flex: 1;
  min-width: 0;
  display: flex;
  flex-direction: column;
  position: relative;
}
.doc-tabs {
  flex: none;
  display: flex;
  height: 23px;
  font-size: 11px;
}
.doc-tabs button {
  display: flex;
  align-items: center;
  width: 50px;
  padding-left: 6px;
  gap: 5px;
  color: #555;
}
.doc-tabs .active {
  width: 120px;
  padding-left: 8px;
  background: #fff;
}
.doc-tabs svg {
  width: 12px;
  height: 12px;
  stroke: #3eb256;
}
.canvas {
  flex: 1;
  min-height: 0;
  display: grid;
  grid-template: 16px minmax(0, 1fr) / 16px minmax(0, 1fr);
  background: #f4f4f4;
}
.ruler-top {
  grid-column: 1 / 3;
  width: 100%;
  height: 16px;
}
.ruler-left,
.board {
  width: 100%;
  height: 100%;
}
.ruler-top pattern path,
.ruler-left pattern path {
  stroke: #a5a5a5;
}
.board pattern path {
  stroke: #484848;
}
.canvas .cursor {
  stroke: #3b78c4;
}
.ruler-top text,
.ruler-left text {
  font-size: 8px;
  fill: #85859a;
}
.mark {
  stroke: #777;
}
.mark text {
  fill: #777;
  stroke: none;
}
.mark-d {
  font: 900 26px Inter, sans-serif;
}
.mark-cn {
  font: 500 33px "Noto Sans CJK SC", sans-serif;
}
.mark-en {
  font: 500 20px Inter, sans-serif;
}

/* floating windows */
.float {
  position: absolute;
  background: #f9f9f9;
  box-shadow: 0 0 4px rgba(0, 0, 0, 0.35);
}
.float-head {
  display: flex;
  align-items: center;
  height: 17px;
  padding: 0 4px;
  gap: 5px;
  background: #eee;
  border-bottom: 1px solid #ddd;
}
.float-head svg {
  width: 10px;
  height: 10px;
  stroke: #555;
}
.float-head svg:first-of-type {
  margin-left: auto;
}
.minus {
  width: 9px;
  height: 1px;
  background: #666;
}
.preview .minus,
.tools .minus {
  margin-left: auto;
}
.grip {
  position: absolute;
  right: 0;
  bottom: 0;
  width: 12px;
  height: 12px;
  stroke: #555;
}
.preview {
  left: 94px;
  bottom: 40px;
  width: 102px;
  height: 101px;
}
.tools {
  top: 0;
  right: 64px;
  width: 221px;
  z-index: 2;
}
.tool-grid {
  display: grid;
  grid-template-columns: repeat(10, 1fr);
  padding: 7px 4px 3px;
}
.tool-grid button {
  height: 21px;
  line-height: 0;
}
.tool-grid svg {
  width: 14px;
  height: 14px;
  stroke: #555;
}
.layers {
  top: 34px;
  right: 41px;
  width: 185px;
  padding-bottom: 5px;
}
.layer-tabs {
  display: flex;
}
.layer-tabs button {
  height: 19px;
  padding: 0 8px;
  background: #ddd;
  border-right: 1px solid #d2d2d2;
}
.layer-tabs .on {
  background: #fff;
  color: #245a9c;
  font-weight: 700;
}
.layers ul {
  margin: 3px 2px 0 1px;
  padding: 0;
  list-style: none;
  background: #ddd;
}
.layers li {
  display: flex;
  align-items: center;
  height: 18px;
  gap: 6px;
}
.layers li svg {
  width: 13px;
  height: 13px;
  stroke: #555;
}
.swatch {
  align-self: stretch;
  width: 24px;
}
.top {
  background: #f00;
}
.bottom {
  background: #00f;
}
.silk {
  background: #fc0;
}

/* properties */
.props {
  width: 150px;
  padding-top: 24px;
  position: relative;
}
.props h3 {
  margin: 0;
  padding-left: 7px;
  background: #ececec;
  font-size: 10px;
  font-weight: 400;
  line-height: 22px;
}
.props h3 span {
  color: #bbb;
  font-size: 6px;
  margin-right: 3px;
}
.props form {
  padding-bottom: 4px;
  background: #fff;
}
.fields {
  display: grid;
  grid-template-columns: 1fr 64px;
  grid-auto-rows: 1fr;
  align-items: center;
  height: 227px;
  padding: 0 10px 0 7px;
}
.fields input,
.fields select {
  width: 64px;
  height: 19px;
  padding: 0 5px;
  border: 1px solid #ccc;
  background: #fff;
  color: #222;
  font: inherit;
}
.fields select {
  padding: 0 2px;
  font-size: 10px;
}
.fields input:disabled {
  background: #ddd;
  color: #777;
}
.solder {
  display: block;
  width: 74px;
  height: 18px;
  margin: 3px auto 0;
  border: 1px solid #d0d0d0;
  border-radius: 2px;
  background: #dcdcdc;
  color: #aaa;
}
.props table {
  width: 100%;
  margin-top: 8px;
  border-collapse: collapse;
  background: #eee;
}
.props th,
.props td {
  height: 18px;
  padding: 0 0 0 5px;
  border-bottom: 1px solid #d4d4d4;
  font-weight: 400;
  text-align: left;
}
.props th {
  width: 74px;
  padding: 2px 0 0 7px;
  border-right: 1px solid #d4d4d4;
}
.callout {
  position: absolute;
  top: 202px;
  left: 58px;
  width: 112px;
  height: 58px;
  stroke: #dc1f28;
  stroke-width: 4;
  pointer-events: none;
  z-index: 2;
}
.edge {
  width: 35px;
  display: flex;
  flex-direction: column;
  align-items: center;
  padding: 9px 0 10px;
  gap: 18px;
}
.edge svg {
  width: 14px;
  height: 14px;
}
.edge hr {
  width: 20px;
  margin: auto 0 -7px;
  border: 0;
  border-top: 1px solid #bbb;
}

/* windows taskbar */
.taskbar {
  height: 19px;
  justify-content: space-between;
  background: linear-gradient(#c6c6c6, #dadada 60%);
  color: #222;
}
.apps {
  display: flex;
  align-self: flex-start;
}
.apps button {
  width: 37px;
  height: 19px;
  line-height: 0;
}
.apps .open {
  border-bottom: 2px solid #0a78d0;
}
.apps .lit {
  background: #f2f2f2;
}
.apps svg {
  width: 18px;
  height: 18px;
  margin-top: -5px;
}
.tray {
  display: flex;
  align-items: center;
  gap: 5px;
  padding-right: 14px;
}
.tray svg {
  width: 13px;
  height: 13px;
  margin-top: -7px;
}
.tray .news {
  margin: -7px 12px 0 2px;
  font-size: 11px;
}
.tray time {
  margin: 4px 8px 0;
  font-size: 9px;
}
.tray .notice {
  width: 19px;
  height: 19px;
  margin-top: 0;
}
.notice text {
  font: 8px Roboto, sans-serif;
  fill: #111;
}
```
